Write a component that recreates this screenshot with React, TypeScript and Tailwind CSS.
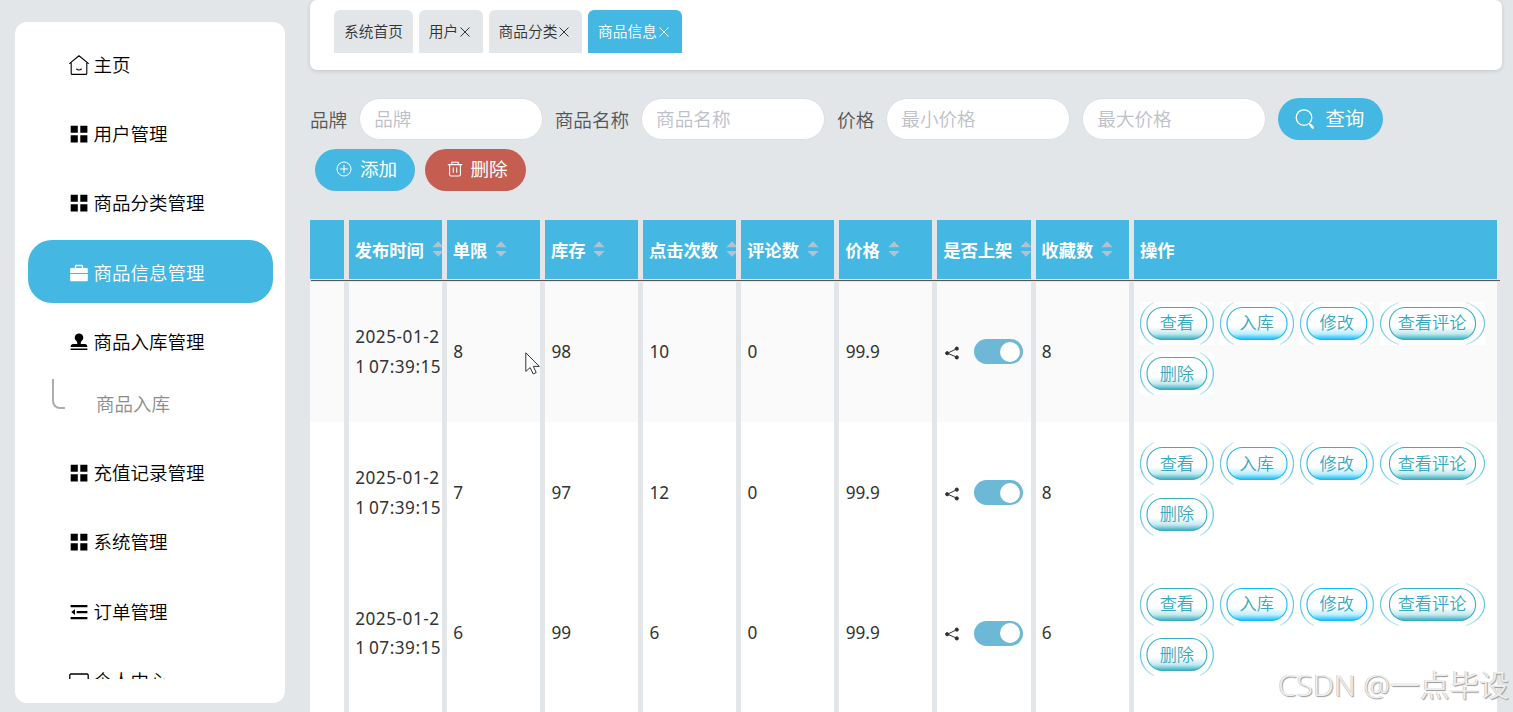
import { useState } from "react";
import type { ReactNode } from "react";

type MenuItem = { label: string; icon: ReactNode; children?: string[] };

const GridIcon = () => (
  <svg className="h-[18px] w-[18px]" viewBox="0 0 18 18" fill="currentColor">
    <path d="M0.7 0.7h7.1v7.1h-7.1zM10.3 0.7h7.1v7.1h-7.1zM0.7 10.3h7.1v7.1h-7.1zM10.3 10.3h7.1v7.1h-7.1z" />
  </svg>
);

const HouseIcon = () => (
  <svg className="-mx-[1px] h-5 w-5" viewBox="0 0 20 20" fill="none" stroke="currentColor" strokeWidth="1.1" strokeLinecap="round" strokeLinejoin="round">
    <path d="M0.7 8.4L10 0.8l9.3 7.6M2.2 8v10.4q0 1 1 1h13.6q1 0 1-1V8M7.6 14q2.4 2 4.8 0" />
  </svg>
);

const CaseIcon = () => (
  <svg className="h-[18px] w-[18px]" viewBox="0 0 18 18" fill="currentColor">
    <path d="M4.8 4V2.2Q4.8 0.8 6.2 0.8h5.6q1.4 0 1.4 1.4V4H17q0.8 0 0.8 0.8v4.1H0.2V4.8Q0.2 4 1 4zM6.3 4h5.4V2.3H6.3zM0.2 10.1h17.6v6.4q0 0.8-0.8 0.8H1q-0.8 0-0.8-0.8z" />
  </svg>
);

const StampIcon = () => (
  <svg className="h-[18px] w-[18px]" viewBox="0 0 18 18" fill="currentColor">
    <path d="M9 0.4a4.2 4.2 0 0 1 2.5 7.6q-0.8 0.7-0.8 3h4.1q2.4 0 2.6 3H0.6q0.2-3 2.6-3h4.1q0-2.3-0.8-3A4.2 4.2 0 0 1 9 0.4zM0.6 15.4h16.8v1.7H0.6z" />
  </svg>
);

const FoldIcon = () => (
  <svg className="h-[18px] w-[18px]" viewBox="0 0 18 18" fill="currentColor">
    <path d="M0.6 2h16.8v2.2H0.6zM6.6 8h10.8v2.2H6.6zM0.6 14h16.8v2.2H0.6zM5 6.2v5.8L1.2 9.1z" />
  </svg>
);

const CardIcon = () => (
  <svg className="-mx-[1px] h-5 w-5" viewBox="0 0 20 20" fill="none" stroke="currentColor" strokeWidth="1.3">
    <rect x="0.8" y="3" width="18.4" height="14" rx="1.2" />
  </svg>
);

const menus: MenuItem[] = [
  { label: "主页", icon: <HouseIcon /> },
  { label: "用户管理", icon: <GridIcon /> },
  { label: "商品分类管理", icon: <GridIcon /> },
  { label: "商品信息管理", icon: <CaseIcon /> },
  { label: "商品入库管理", icon: <StampIcon />, children: ["商品入库"] },
  { label: "充值记录管理", icon: <GridIcon /> },
  { label: "系统管理", icon: <GridIcon /> },
  { label: "订单管理", icon: <FoldIcon /> },
  { label: "个人中心", icon: <CardIcon /> },
];

const tabs = [
  { label: "系统首页", closable: false, width: "w-[79px]" },
  { label: "用户", closable: true, width: "w-16" },
  { label: "商品分类", closable: true, width: "w-[93px]" },
  { label: "商品信息", closable: true, width: "w-[94px]" },
];

const columns = ["发布时间", "单限", "库存", "点击次数", "评论数", "价格", "是否上架", "收藏数"];

const rows = [
  { time: "2025-01-21 07:39:15", limit: 8, stock: 98, clicks: 10, comments: 0, price: 99.9, favorites: 8 },
  { time: "2025-01-21 07:39:15", limit: 7, stock: 97, clicks: 12, comments: 0, price: 99.9, favorites: 8 },
  { time: "2025-01-21 07:39:15", limit: 6, stock: 99, clicks: 6, comments: 0, price: 99.9, favorites: 6 },
];

const actions = [
  { label: "查看", width: 73.8, tone: "teal" },
  { label: "入库", width: 74, tone: "sky" },
  { label: "修改", width: 73.8, tone: "sky" },
  { label: "查看评论", width: 105, tone: "teal" },
  { label: "删除", width: 73.8, tone: "teal" },
];

const gridCols = "grid grid-cols-[38.9px_repeat(8,98.1px)_368.3px]";
const cell = "overflow-hidden border-r-[5px] border-[#e2e6e8] px-[6.3px]";

function Sidebar() {
  return (
    <aside className="mt-[22px] ml-[15px] h-[681px] w-[270px] shrink-0 rounded-xl bg-white px-[12.5px] pt-[10px]">
      <ul className="h-[647px] overflow-hidden text-[18.5px] font-[350] text-black">
        {menus.map((item) => (
          <li key={item.label}>
            <div
              className={`mb-[6.4px] flex h-[63px] items-center gap-[5.5px] rounded-3xl pt-[2px] pl-[42.5px] ${
                item.label === "商品信息管理" ? "bg-[#44b7e2] text-white" : ""
              }`}
            >
              {item.icon}
              <span>{item.label}</span>
            </div>
            {item.children?.map((child) => (
              <div key={child} className="flex h-[61.3px] pl-6 text-[#8c8c8c]">
                <span className="h-[30px] w-[13px] rounded-bl-lg border-b-2 border-l-2 border-[#adadad]" />
                <span className="ml-[31.5px] leading-[50px]">{child}</span>
              </div>
            ))}
          </li>
        ))}
      </ul>
    </aside>
  );
}

function Tabs() {
  const [active, setActive] = useState("商品信息");
  return (
    <div className="flex h-[70px] w-[1192px] gap-[6px] rounded-[7px] bg-white pt-[10px] pl-6 shadow-[0_1px_4px_rgba(0,0,0,0.14)]">
      {tabs.map((tab) => (
        <button
          key={tab.label}
          onClick={() => setActive(tab.label)}
          className={`flex h-[43px] items-center justify-center rounded-t-[6px] text-[14.7px] font-[350] ${tab.width} ${
            active === tab.label ? "bg-[#44b7e2] text-white" : "bg-[#e2e6e8] text-[#333]"
          }`}
        >
          {tab.label}
          {tab.closable && (
            <svg className="mr-[2px] ml-[1px] h-3 w-3" viewBox="0 0 12 12" stroke="currentColor" strokeWidth="1">
              <path d="M1.5 1.5l9 9M10.5 1.5l-9 9" />
            </svg>
          )}
        </button>
      ))}
    </div>
  );
}

function Input({ placeholder }: { placeholder: string }) {
  return (
    <input
      placeholder={placeholder}
      className="h-[42px] w-[183.5px] rounded-full border border-[#dcdfe3] bg-white px-[14px] pb-[2px] text-[18.6px] font-[350] text-[#606266] outline-none placeholder:text-[#bcc0c9]"
    />
  );
}

function Filters() {
  return (
    <div className="mt-7">
      <div className="flex items-center text-[18.6px] font-[350] text-[#555]">
        <label className="mt-[2px] mr-3">品牌</label>
        <Input placeholder="品牌" />
        <label className="mt-[2px] mr-3 ml-3">商品名称</label>
        <Input placeholder="商品名称" />
        <label className="mt-[2px] mr-3 ml-[12.5px]">价格</label>
        <Input placeholder="最小价格" />
        <span className="w-[12.5px]" />
        <Input placeholder="最大价格" />
        <button className="ml-[12.5px] flex h-[42px] w-[104.5px] items-center rounded-full bg-[#44b7e2] pl-[17px] text-[19.5px] font-normal text-white">
          <svg className="mr-[10px] h-5 w-5" viewBox="0 0 20 20" fill="none" stroke="currentColor" strokeLinecap="round">
            <circle cx="9" cy="8.6" r="7.8" strokeWidth="1.3" />
            <path d="M14.2 14.6l0.6 0.6" strokeWidth="1.3" />
            <path d="M15.6 16l2.2 2.6" strokeWidth="2.4" />
          </svg>
          查询
        </button>
      </div>
      <div className="mt-[9px] ml-[4.5px] flex gap-[10px] text-[18.6px] text-white">
        <button className="flex h-[42px] w-[100.5px] items-center rounded-full bg-[#44b7e2] pb-[3px] pl-[21.5px]">
          <svg className="mr-2 h-4 w-4" viewBox="0 0 16 16" fill="none" stroke="currentColor" strokeWidth="1">
            <circle cx="8" cy="8" r="7" />
            <path d="M8 4v8M4 8h8" />
          </svg>
          添加
        </button>
        <button className="flex h-[42px] w-[101px] items-center rounded-full bg-[#c65d51] pb-[3px] pl-[21.5px]">
          <svg className="mr-2 h-4 w-4" viewBox="0 0 16 16" fill="none" stroke="currentColor" strokeWidth="1.1">
            <path d="M0.8 3.6h14.4M4.8 3.4V1.3h6.4v2.1M2.6 3.8v9.8q0 1.4 1.4 1.4h8q1.4 0 1.4-1.4V3.8M6.3 6.6v5.2M9.7 6.6v5.2" />
          </svg>
          删除
        </button>
      </div>
    </div>
  );
}

function SortCaret() {
  return (
    <svg className="-mt-[1px] ml-2 h-4 w-3 shrink-0" viewBox="0 0 12 16" fill="#b5c1cc">
      <path d="M0.3 6.2L6 0.3l5.7 5.9zM0.3 10L6 15.8 11.7 10z" />
    </svg>
  );
}

function ActionButton({ label, width, tone }: { label: string; width: number; tone: string }) {
  const wide = width > 80;
  const inset = wide ? 9.5 : 7;
  const reach = wide ? 19 : 14;
  const color = tone === "teal" ? "#35aec4" : "#12bdf7";
  const id = `${tone}-fill`;
  return (
    <button className="relative h-[43px] bg-white" style={{ width }}>
      <svg className="absolute inset-0" width={width} height="43" viewBox={`0 0 ${width} 43`} fill="none">
        <defs>
          <linearGradient id={id} x1="0" y1="0" x2="0" y2="1">
            <stop offset="0.6" stopColor="#fff" />
            <stop offset="0.82" stopColor={tone === "teal" ? "#c3e9ee" : "#bdeefe"} />
            <stop offset="1" stopColor={color} />
          </linearGradient>
          <linearGradient id="arc-fade" x1="0" y1="0" x2="0" y2="43" gradientUnits="userSpaceOnUse">
            <stop offset="0" stopColor="#8cd3ea" stopOpacity="0.4" />
            <stop offset="0.3" stopColor="#6cc9e4" />
            <stop offset="0.7" stopColor="#6cc9e4" />
            <stop offset="1" stopColor="#8cd3ea" stopOpacity="0.5" />
          </linearGradient>
        </defs>
        <rect x={inset} y="5.5" width={width - inset * 2} height="32" rx="15.5" fill={`url(#${id})`} stroke={color} strokeWidth="1.1" />
        <path
          d={`M${reach} 0.5C${-reach / 3 + 0.6} 9 ${-reach / 3 + 0.6} 34 ${reach} 42.5M${width - reach} 0.5C${width + reach / 3 - 0.6} 9 ${width + reach / 3 - 0.6} 34 ${width - reach} 42.5`}
          stroke="url(#arc-fade)"
          strokeWidth="1.3"
        />
      </svg>
      <span className="relative text-[17.2px] font-[350] text-[#35a9bf]">{label}</span>
    </button>
  );
}

function ShelfSwitch() {
  const [on, setOn] = useState(true);
  return (
    <div className="flex items-center">
      <svg className="mt-[2px] ml-[1.5px] h-[14px] w-[14px] shrink-0" viewBox="0 0 14 14" fill="#303133" stroke="#303133">
        <path d="M12 2.6L2.5 7.2l9.5 4.1" fill="none" strokeWidth="1" />
        <circle cx="11.8" cy="2.6" r="1.6" />
        <circle cx="2.2" cy="7.2" r="1.6" />
        <circle cx="11.8" cy="11.4" r="1.6" />
      </svg>
      <button
        onClick={() => setOn(!on)}
        className={`ml-[14.5px] flex h-[25px] w-[49px] shrink-0 items-center rounded-full px-[3px] ${
          on ? "justify-end bg-[#6db8d6]" : "justify-start bg-[#dcdfe6]"
        }`}
      >
        <span className="h-5 w-5 rounded-full bg-white" />
      </button>
    </div>
  );
}

function ProductTable() {
  return (
    <div className="mt-[29px] w-[1192px]">
      <div className={`${gridCols} h-[59px] text-[17.3px] font-bold text-white`}>
        <div className={`${cell} flex items-center bg-[#44b7e2]`}>
          <span className="-ml-[25px] flex">
            <SortCaret />
          </span>
        </div>
        {columns.map((col) => (
          <div key={col} className={`${cell} flex items-center bg-[#44b7e2] whitespace-nowrap`}>
            <span className="mt-[3px] -ml-[0.5px]">{col}</span>
            <SortCaret />
          </div>
        ))}
        <div className={`${cell} flex items-center bg-[#44b7e2]`}>
          <span className="mt-[3px]">操作</span>
        </div>
      </div>
      <div className="mt-[1px] mb-[0.5px] ml-[1px] h-px w-[1189px] bg-[#5b5558]" />
      {rows.map((row, i) => (
        <div
          key={i}
          className={`${gridCols} h-[140.7px] text-[17.2px] text-[#333] ${i === 0 ? "bg-[#fafafa]" : "bg-white"}`}
        >
          <div className={cell} />
          <div className={`${cell} flex items-center pr-0`}>
            <span className="leading-[29.5px] tracking-[0.5px] break-all [word-spacing:-1.5px]">{row.time}</span>
          </div>
          <div className={`${cell} flex items-center`}>{row.limit}</div>
          <div className={`${cell} flex items-center`}>{row.stock}</div>
          <div className={`${cell} flex items-center`}>{row.clicks}</div>
          <div className={`${cell} flex items-center`}>{row.comments}</div>
          <div className={`${cell} flex items-center`}>{row.price}</div>
          <div className={`${cell} flex items-center`}>
            <ShelfSwitch />
          </div>
          <div className={`${cell} flex items-center`}>{row.favorites}</div>
          <div className={`${cell} flex flex-wrap content-start gap-x-[6px] gap-y-[7.5px] pt-[20px] pr-0`}>
            {actions.map((action) => (
              <ActionButton key={action.label} {...action} />
            ))}
          </div>
        </div>
      ))}
      <div className={`${gridCols} h-10 bg-white`}>
        {Array.from({ length: 10 }, (_, i) => (
          <div key={i} className={cell} />
        ))}
      </div>
    </div>
  );
}

export default function App() {
  return (
    <div className="relative flex h-[712px] w-[1513px] overflow-hidden bg-[#e2e6e9] font-['Noto_Sans','Noto_Sans_CJK_SC',sans-serif]">
      <Sidebar />
      <main className="ml-[25px] flex-1">
        <Tabs />
        <Filters />
        <ProductTable />
      </main>

      {/* Mouse pointer */}
      <svg className="absolute top-[352px] left-[525px] h-6 w-4" viewBox="0 0 16 24" fill="#fff" stroke="#333" strokeWidth="1">
        <path d="M0.8 0.8v18.6l4.4-3.8 3 6.4 3-1.4-2.9-6.2h6z" />
      </svg>

      {/* Watermark */}
      <div className="absolute top-[664px] left-[1278px] text-[29.8px] leading-[42px] font-[350] whitespace-nowrap text-white/80 [text-shadow:1px_1px_1px_#999,-0.5px_-0.5px_0.5px_#bbb]">
        CSDN @一点毕设
      </div>
    </div>
  );
}
